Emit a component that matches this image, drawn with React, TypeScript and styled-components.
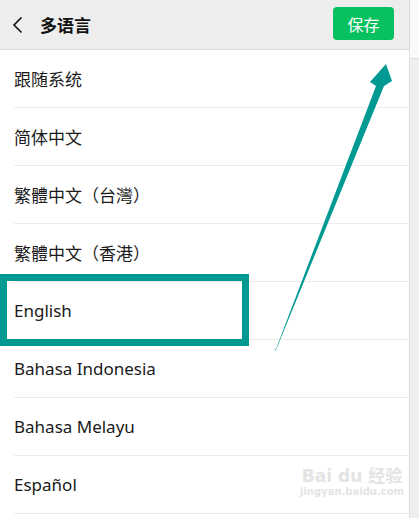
import React from "react";
import styled, { createGlobalStyle } from "styled-components";

const GlobalStyle = createGlobalStyle`
  html, body {
    margin: 0;
    padding: 0;
    background: #ffffff;
    font-family: "Noto Sans", "Noto Sans CJK SC", sans-serif;
    overflow: hidden;
  }
`;

const languages = [
  "跟随系统",
  "简体中文",
  "繁體中文（台灣）",
  "繁體中文（香港）",
  "English",
  "Bahasa Indonesia",
  "Bahasa Melayu",
  "Español",
];

export default function App() {
  return (
    <>
      <GlobalStyle />
      <Screen>
        <Panel>
          <Header>
            <BackButton>
              <svg width="12" height="18" viewBox="0 0 12 18">
                <path d="M9.5 1.5 L2 9 L9.5 16.5" fill="none" stroke="#111" strokeWidth="1.6" />
              </svg>
            </BackButton>
            <Title>多语言</Title>
            <SaveButton>保存</SaveButton>
          </Header>
          <List>
            {languages.map((name) => (
              <Row key={name}>
                <Label>{name}</Label>
              </Row>
            ))}
          </List>
          <Highlight />
          <Arrow width="409" height="518" viewBox="0 0 409 518">
            <polygon
              points="274,350 276,349 376,86 370,82 386,64 392,81 384,86 276,350"
              fill="#009a93"
            />
            <polygon points="383,86 376,86 380,95" fill="#009a93" />
          </Arrow>
          <Watermark>
            <WmBrand>Bai du 经验</WmBrand>
            <WmUrl>jingyan.baidu.com</WmUrl>
          </Watermark>
        </Panel>
        <SideStrip>
          <SideTop />
        </SideStrip>
      </Screen>
    </>
  );
}

const Screen = styled.div`
  display: flex;
  width: 419px;
  height: 518px;
`;

const Panel = styled.div`
  position: relative;
  width: 409px;
  flex: none;
  background: #fff;
  overflow: hidden;
`;

const Header = styled.div`
  display: flex;
  align-items: center;
  height: 50px;
  padding: 0 15px 0 12px;
  box-sizing: border-box;
  background: #ededed;
  border-bottom: 1px solid #dcdcdc;
`;

const BackButton = styled.div`
  display: flex;
  align-items: center;
  width: 28px;
`;

const Title = styled.div`
  flex: 1;
  font-size: 17px;
  font-weight: 700;
  color: #111;
`;

const SaveButton = styled.div`
  display: flex;
  align-items: center;
  justify-content: center;
  width: 61px;
  height: 33px;
  margin-top: -2px;
  border-radius: 4px;
  background: #07c160;
  color: #fff;
  font-size: 16px;
`;

const List = styled.div`
  display: flex;
  flex-direction: column;
`;

const Row = styled.div`
  display: flex;
  align-items: center;
  height: 58px;
  margin-left: 14px;
  box-sizing: border-box;
  border-bottom: 1px solid #ececec;
`;

const Label = styled.div`
  font-size: 17px;
  color: #1a1a1a;
`;

const Highlight = styled.div`
  position: absolute;
  left: 0;
  top: 274px;
  width: 249px;
  height: 72px;
  box-sizing: border-box;
  border: 7px solid #009a93;
  pointer-events: none;
`;

const Arrow = styled.svg`
  position: absolute;
  left: 0;
  top: 0;
  pointer-events: none;
`;

const Watermark = styled.div`
  position: absolute;
  left: 300px;
  top: 466px;
  display: flex;
  flex-direction: column;
  align-items: center;
  color: #e4e4e4;
  font-family: "DejaVu Sans", "Noto Sans CJK SC", sans-serif;
  white-space: nowrap;
  line-height: 1.2;
  pointer-events: none;
`;

const WmBrand = styled.div`
  font-size: 17px;
  font-weight: 700;
`;

const WmUrl = styled.div`
  font-size: 10px;
  font-weight: 700;
`;

const SideStrip = styled.div`
  flex: 1;
  display: flex;
  flex-direction: column;
  background: #efefef;
  border-left: 1px solid #dedede;
`;

const SideTop = styled.div`
  height: 58px;
  background: #fafafa;
  border-bottom: 1px solid #dedede;
`;
